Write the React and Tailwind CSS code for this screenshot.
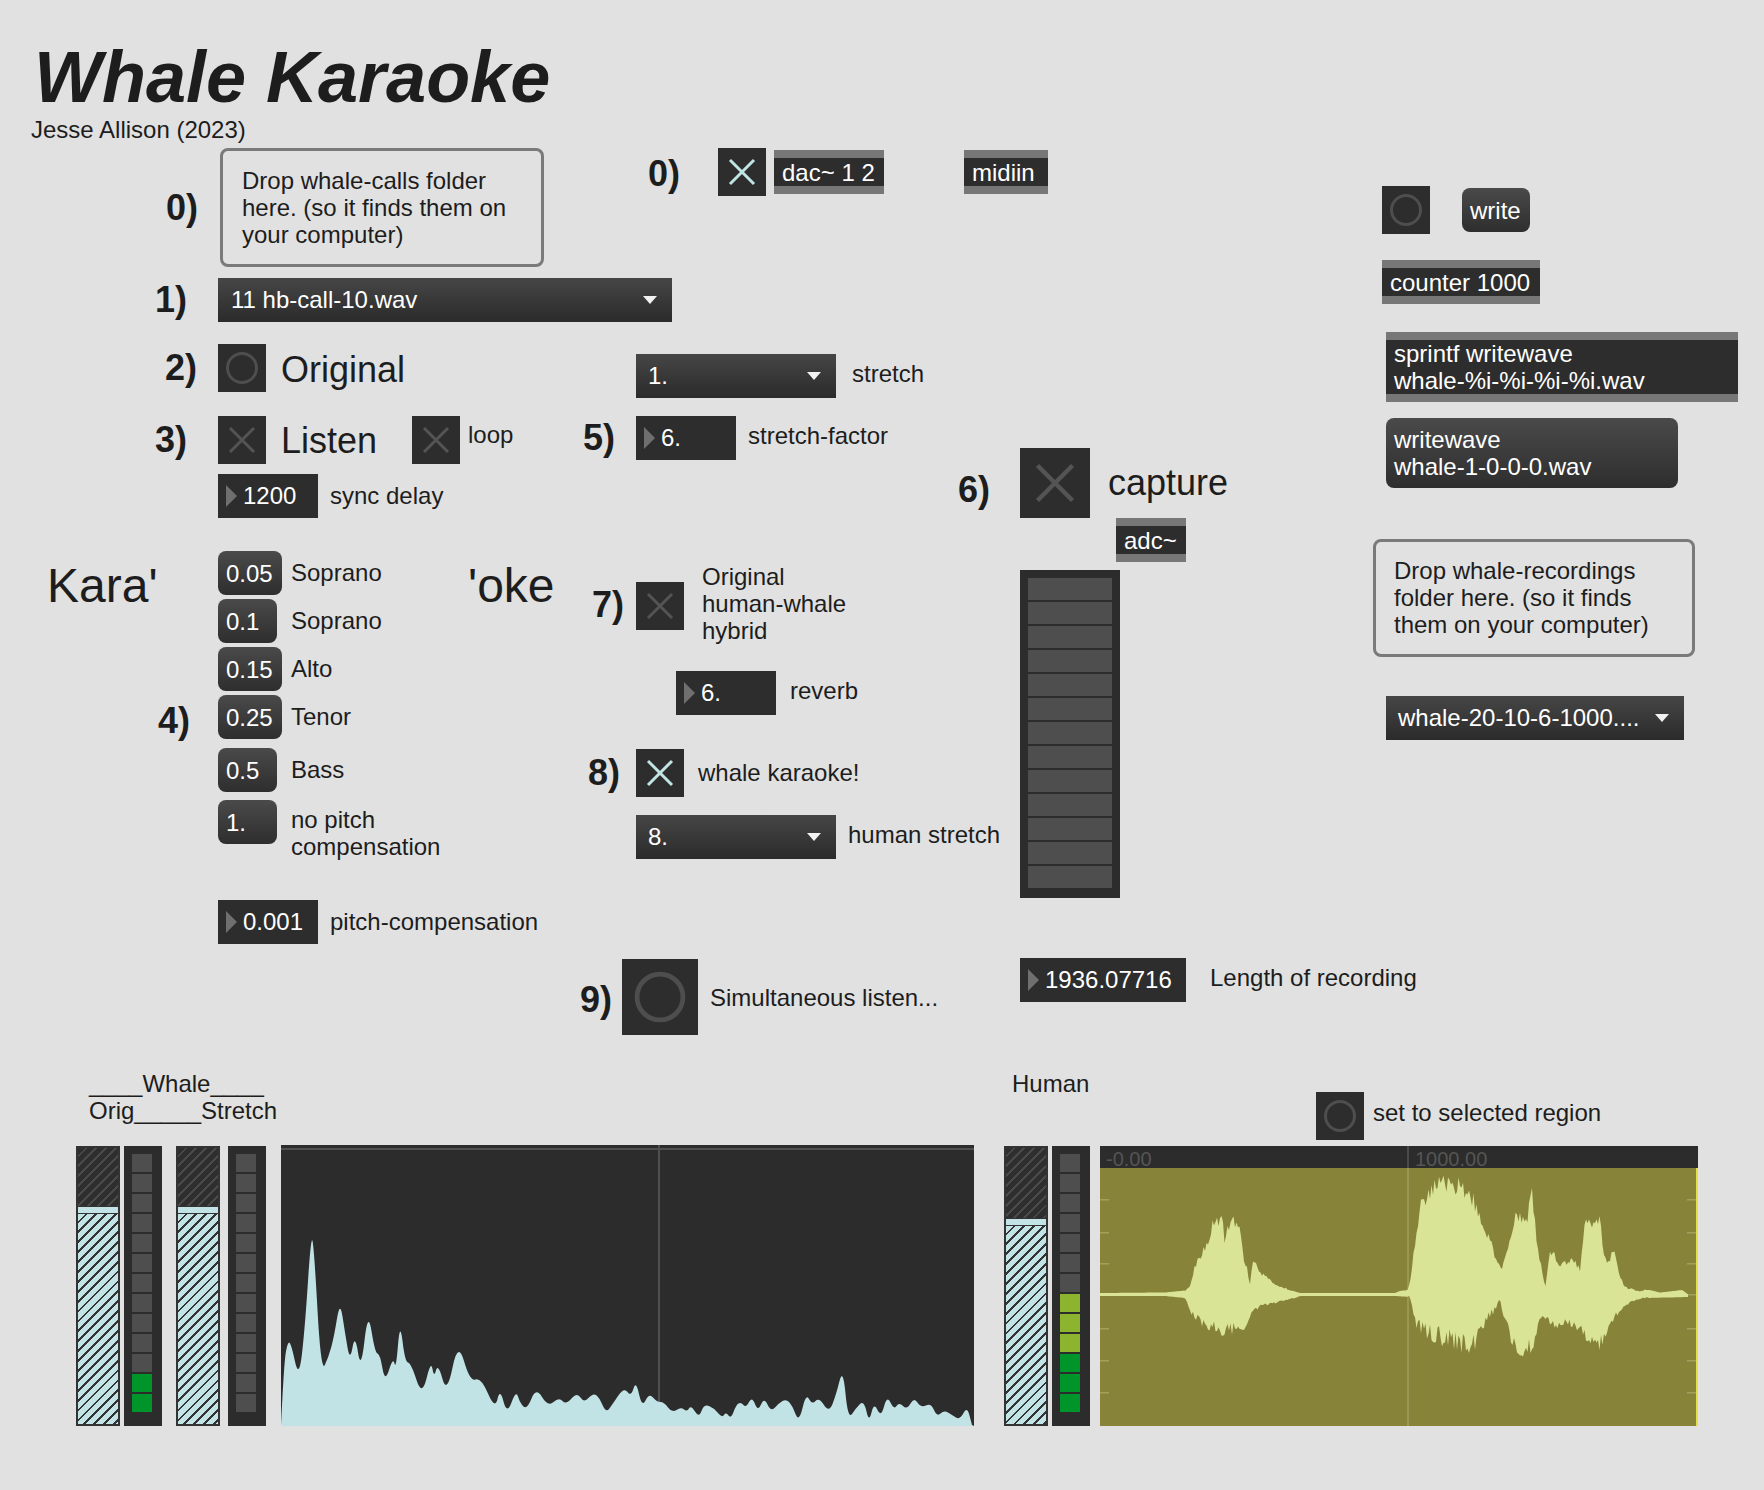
import React from "react";

const SPEC = [[0,280],[3,218],[6.6,197],[10,198],[18,235],[24,182],[30,90],[33,102],[40,228],[47.6,212],[53,192],[59,155],[64,188],[69,217],[74,188],[80,227],[87,164],[94,208],[99,209],[104,238],[112,212],[115,225],[119,175],[124,217],[130,218],[141,252],[150,215],[153,233],[157,218],[166,250],[177,195],[189,237],[200,232],[214,265],[219,243],[226,270],[235,245],[239,258],[246,265],[255,242],[267,262],[278,252],[285,260],[296,247],[303,258],[312,248],[318,252],[325,268],[331,260],[343,242],[350,252],[355,235],[361,263],[368,248],[376,257],[383,257],[391,268],[400,262],[406,267],[410,260],[418,273],[423,259],[433,263],[441,273],[445,267],[450,274],[455,260],[460,257],[465,263],[471,251],[477,267],[483,252],[490,267],[498,258],[505,254],[511,260],[518,278],[525,248],[531,260],[538,252],[548,268],[555,250],[562,222],[567,275],[575,263],[583,255],[588,278],[593,257],[600,273],[606,250],[613,265],[618,257],[626,265],[633,252],[640,263],[650,258],[656,272],[663,265],[671,270],[679,275],[686,261],[691,280]];

const WAVE_TOP = [[0,125],[65,124.5],[85,122.5],[90,115],[96,92],[102,79],[110,65],[112,52],[122,45],[125,68],[130,48],[139,47],[142,75],[150,112],[153,89],[160,102],[175,115],[195,123.5],[200,125],[295,125],[300,123],[308,122],[311,108],[315,68],[320,32],[327,18],[335,7],[350,4],[360,10],[372,20],[380,38],[390,67],[397,92],[402,98],[410,62],[417,32],[425,48],[432,18],[437,72],[445,118],[450,77],[460,92],[472,88],[480,98],[485,48],[492,52],[500,42],[505,88],[515,82],[520,105],[525,118],[540,123],[545,121],[560,124.5],[582,122],[589,127]];
const WAVE_BOT = [[0,128],[65,128],[85,130],[90,145],[100,157],[115,167],[127,169],[145,169],[152,145],[170,137],[195,130],[200,128],[295,128],[310,129],[315,158],[325,173],[340,178],[360,185],[372,188],[380,172],[390,152],[400,135],[407,162],[415,188],[425,197],[435,178],[442,148],[455,163],[467,158],[480,165],[487,175],[500,185],[507,165],[517,148],[530,135],[545,130],[589,129]];

function interp(pts, x) {
  for (let i = 1; i < pts.length; i++) {
    if (x <= pts[i][0]) {
      const [x0, y0] = pts[i - 1];
      const [x1, y1] = pts[i];
      const t = x1 === x0 ? 0 : (x - x0) / (x1 - x0);
      return y0 + (y1 - y0) * t;
    }
  }
  return pts[pts.length - 1][1];
}

// blocky, spiky waveform built from the two envelopes
function wavePath() {
  const up = [];
  const dn = [];
  for (let x = 0; x <= 589; x += 1.5) {
    let t = interp(WAVE_TOP, x);
    let b = interp(WAVE_BOT, x);
    const amp = b - t;
    if (amp > 8) {
      const r = Math.abs(Math.sin(x * 12.9898) * 43758.5453) % 1;
      const r2 = Math.abs(Math.sin(x * 78.233) * 12345.678) % 1;
      t += r * amp * 0.12;
      b -= r2 * amp * 0.12;
    }
    up.push(`${x.toFixed(1)} ${t.toFixed(1)}`);
    dn.push(`${x.toFixed(1)} ${b.toFixed(1)}`);
  }
  return "M" + up.join(" L") + " L" + dn.reverse().join(" L") + " Z";
}

// smoothed spectrum outline
function specPath() {
  let d = `M${SPEC[0][0]} ${SPEC[0][1]}`;
  for (let i = 1; i < SPEC.length - 1; i++) {
    const [x, y] = SPEC[i];
    const [nx, ny] = SPEC[i + 1];
    d += ` Q${x} ${y} ${(x + nx) / 2} ${(y + ny) / 2}`;
  }
  const last = SPEC[SPEC.length - 1];
  return d + ` L${last[0]} ${last[1]} L693 281 L0 281 Z`;
}

function Lbl({ className = "", children }) {
  return <div className={`text-[24px] leading-[27px] whitespace-pre ${className}`}>{children}</div>;
}

function Big({ className = "", children }) {
  return <div className={`text-[36px] leading-[40px] whitespace-nowrap ${className}`}>{children}</div>;
}

function Step({ className = "", children }) {
  return <div className={`shrink-0 text-[36px] leading-[40px] font-bold ${className}`}>{children}</div>;
}

function Toggle({ className = "size-[48px]", on }) {
  return (
    <div className={`shrink-0 bg-[#2d2d2d] ${className}`}>
      <svg viewBox="0 0 48 48" className="block size-full">
        <path d="M12 12 L36 36 M36 12 L12 36" stroke={on ? "#c0e4e4" : "#545454"} strokeWidth="3" fill="none" />
      </svg>
    </div>
  );
}

function Bang({ className = "size-[48px]" }) {
  return (
    <div className={`shrink-0 bg-[#2d2d2d] ${className}`}>
      <svg viewBox="0 0 48 48" className="block size-full">
        <circle cx="24" cy="24" r="14.5" fill="none" stroke="#4e4e4e" strokeWidth="3" />
      </svg>
    </div>
  );
}

function Obj({ className = "", children }) {
  return (
    <div className={`flex items-center bg-[#2d2d2d] border-y-8 border-[#777777] px-[8px] text-white text-[24px] leading-[27px] ${className}`}>
      <div>{children}</div>
    </div>
  );
}

function Msg({ className = "", children }) {
  return (
    <div className={`flex items-center rounded-[8px] bg-linear-to-b from-[#4a4a4a] to-[#2e2e2e] px-[8px] text-white text-[24px] leading-[27px] ${className}`}>
      <div>{children}</div>
    </div>
  );
}

function Num({ className = "w-[100px]", children }) {
  return (
    <div className={`shrink-0 h-[44px] flex items-center bg-[#2d2d2d] text-white text-[24px] ${className}`}>
      <svg width="12" height="22" viewBox="0 0 12 22" className="ml-[8px] mr-[5px] shrink-0">
        <path d="M0 0 L11 11 L0 22 Z" fill="#6f6f6f" />
      </svg>
      <span>{children}</span>
    </div>
  );
}

function Menu({ className = "", children }) {
  return (
    <div className={`shrink-0 h-[44px] flex items-center justify-between bg-linear-to-b from-[#464646] to-[#2b2b2b] pr-[15px] text-white text-[24px] ${className}`}>
      <span>{children}</span>
      <svg width="14" height="8" viewBox="0 0 14 8">
        <path d="M0 0 H14 L7 8 Z" fill="#f2f2f2" />
      </svg>
    </div>
  );
}

function Comment({ className = "", children }) {
  return (
    <div className={`rounded-[8px] border-[3px] border-[#7a7a7a] text-[24px] leading-[27px] ${className}`}>
      {children}
    </div>
  );
}

function Slider({ topH }) {
  return (
    <div className="shrink-0 w-[44px] h-[280px] flex flex-col border-2 border-[#333333] bg-[#333333]">
      <div className={`${topH} bg-[repeating-linear-gradient(135deg,#2e2e2e_0px,#2e2e2e_5px,#4a4a4a_5px,#4a4a4a_7px)]`} />
      <div className="h-[8px] bg-[#c2e4e6] border-y border-[#333333]" />
      <div className="flex-1 bg-[repeating-linear-gradient(135deg,#c2e4e6_0px,#c2e4e6_5px,#333333_5px,#333333_7px)]" />
    </div>
  );
}

function Meter({ className = "", colors }) {
  return (
    <div className={`shrink-0 w-[38px] h-[280px] bg-[#2c2c2c] pt-[8px] pl-[8px] flex flex-col gap-[2px] ${className}`}>
      {colors.map((c, i) => (
        <div key={i} className={`w-[20px] h-[18px] ${c}`} />
      ))}
    </div>
  );
}

const G = "bg-[#4e4e4e]";
const GREEN = "bg-[#00952b]";
const OLIVE = "bg-[#8cb42f]";

const VOICES = [
  { v: "0.05", w: "w-[64px]", label: "Soprano" },
  { v: "0.1", w: "w-[59px]", label: "Soprano" },
  { v: "0.15", w: "w-[64px]", label: "Alto" },
  { v: "0.25", w: "w-[64px]", label: "Tenor", step: "4)" },
  { v: "0.5", w: "w-[59px]", label: "Bass", gap: "mt-[5px]" },
  { v: "1.", w: "w-[59px]", label: "no pitch\ncompensation", gap: "mt-[4px]", top: true },
];

export default function App() {
  const wave = wavePath();
  const spec = specPath();

  return (
    <div className="relative w-[1764px] h-[1490px] overflow-hidden bg-[#e1e1e1] font-['Liberation_Sans',Arial,sans-serif] text-[#1d1d1d]">
      {/* title */}
      <header className="absolute left-[31px] top-[41px] flex flex-col">
        <h1 className="ml-[3px] text-[72px] leading-[72px] font-bold italic whitespace-nowrap">Whale Karaoke</h1>
        <Lbl className="mt-[3px]">Jesse Allison (2023)</Lbl>
      </header>

      <Big className="absolute left-[47px] top-[560px] text-[48px] leading-[52px]">Kara'</Big>
      <Big className="absolute left-[468px] top-[560px] text-[48px] leading-[52px]">'oke</Big>

      {/* steps 0 - 4 */}
      <section className="absolute left-[155px] top-[148px] flex flex-col">
        <div className="flex items-center">
          <Step className="w-[63px] pl-[11px]">0)</Step>
          <Comment className="ml-[2px] w-[324px] h-[119px] pl-[19px] pt-[16px]">
            Drop whale-calls folder
            <br />
            here. (so it finds them on
            <br />
            your computer)
          </Comment>
        </div>
        <div className="mt-[11px] flex items-center">
          <Step className="w-[63px]">1)</Step>
          <Menu className="w-[454px] pl-[13px]">11 hb-call-10.wav</Menu>
        </div>
        <div className="mt-[22px] flex items-center">
          <Step className="w-[63px] pl-[10px]">2)</Step>
          <Bang />
          <Big className="ml-[15px] mt-[4px]">Original</Big>
        </div>
        <div className="mt-[24px] flex items-center">
          <Step className="w-[63px]">3)</Step>
          <Toggle />
          <Big className="ml-[15px] w-[131px] mt-[2px]">Listen</Big>
          <Toggle />
          <Lbl className="ml-[8px] self-start mt-[5px]">loop</Lbl>
        </div>
        <div className="mt-[10px] flex items-center">
          <div className="w-[63px]" />
          <Num>1200</Num>
          <Lbl className="ml-[12px] -mt-[2px]">sync delay</Lbl>
        </div>

        <div className="mt-[33px] flex flex-col gap-[4px]">
          {VOICES.map((r) => (
            <div key={r.v} className={`flex ${r.top ? "items-start" : "items-center"} ${r.gap || ""}`}>
              <Step className={`w-[63px] pl-[3px] ${r.step ? "translate-y-[4px]" : ""}`}>{r.step || ""}</Step>
              <div className="w-[73px]">
                <Msg className={`${r.w} h-[44px]`}>{r.v}</Msg>
              </div>
              <Lbl className={r.top ? "mt-[6px] leading-[26px]" : "-mt-[2px]"}>{r.label}</Lbl>
            </div>
          ))}
        </div>

        <div className="mt-[40px] flex items-center">
          <div className="w-[63px]" />
          <Num>0.001</Num>
          <Lbl className="ml-[12px] -mt-[2px]">pitch-compensation</Lbl>
        </div>
      </section>

      {/* audio on/off */}
      <section className="absolute left-[648px] top-[148px] flex items-center">
        <Step className="w-[70px] mt-[4px]">0)</Step>
        <Toggle on />
        <Obj className="ml-[8px] w-[110px] h-[44px]">dac~ 1 2</Obj>
        <Obj className="ml-[80px] w-[84px] h-[44px]">midiin</Obj>
      </section>

      {/* steps 5, 7, 8, 9 */}
      <section className="absolute left-[580px] top-[354px] flex flex-col">
        <div className="flex items-center">
          <div className="w-[56px]" />
          <Menu className="w-[200px] pl-[12px]">1.</Menu>
          <Lbl className="ml-[16px] -mt-[6px]">stretch</Lbl>
        </div>
        <div className="mt-[18px] flex items-center">
          <Step className="w-[56px] pl-[3px]">5)</Step>
          <Num>6.</Num>
          <Lbl className="ml-[12px] -mt-[6px]">stretch-factor</Lbl>
        </div>
        <div className="mt-[102px] flex items-start">
          <Step className="w-[56px] pl-[12px] mt-[23px]">7)</Step>
          <Toggle className="size-[48px] mt-[20px]" />
          <Lbl className="ml-[18px] mt-[1px]">{"Original\nhuman-whale\nhybrid"}</Lbl>
        </div>
        <div className="mt-[27px] flex items-center">
          <div className="w-[96px]" />
          <Num>6.</Num>
          <Lbl className="ml-[14px] -mt-[5px]">reverb</Lbl>
        </div>
        <div className="mt-[34px] flex items-center">
          <Step className="w-[56px] pl-[8px]">8)</Step>
          <Toggle on />
          <Lbl className="ml-[14px] -mt-[2px]">whale karaoke!</Lbl>
        </div>
        <div className="mt-[18px] flex items-center">
          <div className="w-[56px]" />
          <Menu className="w-[200px] pl-[12px]">8.</Menu>
          <Lbl className="ml-[12px] -mt-[6px]">human stretch</Lbl>
        </div>
        <div className="mt-[100px] flex items-center">
          <Step className="w-[42px] mt-[6px]">9)</Step>
          <Bang className="size-[76px]" />
          <Lbl className="ml-[12px]">Simultaneous listen...</Lbl>
        </div>
      </section>

      {/* step 6: capture */}
      <section className="absolute left-[958px] top-[448px] flex flex-col">
        <div className="flex items-center">
          <Step className="w-[62px] mt-[14px]">6)</Step>
          <Toggle className="size-[70px]" />
          <Big className="ml-[18px]">capture</Big>
        </div>
        <Obj className="ml-[158px] w-[70px] h-[44px]">adc~</Obj>
        <div className="mt-[8px] ml-[62px] w-[100px] h-[328px] bg-[#2c2c2c] pt-[8px] pl-[8px] flex flex-col gap-[2px]">
          {Array.from({ length: 13 }).map((_, i) => (
            <div key={i} className="w-[84px] h-[22px] bg-[#4e4e4e]" />
          ))}
        </div>
        <div className="mt-[60px] ml-[62px] flex items-center">
          <Num className="w-[166px]">1936.07716</Num>
          <Lbl className="ml-[24px] -mt-[5px]">Length of recording</Lbl>
        </div>
      </section>

      {/* recording / writing */}
      <section className="absolute left-[1373px] top-[186px] flex flex-col items-start">
        <div className="ml-[9px] flex items-center">
          <Bang />
          <Msg className="ml-[32px] w-[68px] h-[44px]">write</Msg>
        </div>
        <Obj className="mt-[26px] ml-[9px] w-[158px] h-[44px]">counter 1000</Obj>
        <Obj className="mt-[28px] ml-[13px] w-[352px] h-[70px]">
          sprintf writewave
          <br />
          whale-%i-%i-%i-%i.wav
        </Obj>
        <Msg className="mt-[16px] ml-[13px] w-[292px] h-[70px]">
          writewave
          <br />
          whale-1-0-0-0.wav
        </Msg>
        <Comment className="mt-[51px] w-[322px] h-[118px] pl-[18px] pt-[15px]">
          Drop whale-recordings
          <br />
          folder here. (so it finds
          <br />
          them on your computer)
        </Comment>
        <Menu className="mt-[39px] ml-[13px] w-[298px] pl-[12px]">whale-20-10-6-1000....</Menu>
      </section>

      {/* whale meters + spectrum */}
      <section className="absolute left-[76px] top-[1070px] flex flex-col">
        <Lbl className="ml-[13px]">{"____Whale____\nOrig_____Stretch"}</Lbl>
        <div className="mt-[22px] flex items-start">
          <Slider topH="h-[58px]" />
          <Meter className="ml-[4px]" colors={[G, G, G, G, G, G, G, G, G, G, G, GREEN, GREEN]} />
          <div className="ml-[14px]">
            <Slider topH="h-[58px]" />
          </div>
          <Meter className="ml-[8px]" colors={Array(13).fill(G)} />
          <div className="ml-[15px] -mt-px w-[693px] h-[281px] bg-[#2c2c2c]">
            <svg viewBox="0 0 693 281" className="block size-full" preserveAspectRatio="none">
              <rect x="0" y="3" width="693" height="2" fill="#4f4f4f" />
              <rect x="377" y="0" width="2" height="281" fill="#4f4f4f" />
              <path d={spec} fill="#c2e3e5" />
            </svg>
          </div>
        </div>
      </section>

      {/* human meters + waveform */}
      <section className="absolute left-[1004px] top-[1070px] flex flex-col">
        <div className="flex items-start">
          <Lbl className="ml-[8px] w-[304px]">Human</Lbl>
          <div className="mt-[22px] flex items-center">
            <Bang />
            <Lbl className="ml-[9px] -mt-[8px]">set to selected region</Lbl>
          </div>
        </div>
        <div className="mt-[6px] flex items-start">
          <Slider topH="h-[70px]" />
          <Meter className="ml-[4px]" colors={[G, G, G, G, G, G, G, OLIVE, OLIVE, OLIVE, GREEN, GREEN, GREEN]} />
          <div className="ml-[10px] w-[598px] h-[280px] flex flex-col">
            <div className="relative h-[22px] bg-[#2c2c2c] text-[20px] leading-[22px] text-[#555555]">
              <span className="absolute left-[6px] top-[2px]">-0.00</span>
              <span className="absolute left-[315px] top-[2px]">1000.00</span>
              <div className="absolute left-[307px] top-0 w-[2px] h-full bg-[#4a4a4a]" />
            </div>
            <div className="flex-1 bg-[#87843a]">
              <svg viewBox="0 0 598 258" className="block size-full" preserveAspectRatio="none">
                {[31, 64, 95, 126, 160, 192, 224].map((y) => (
                  <g key={y}>
                    <rect x="0" y={y} width="9" height="1.5" fill="#a29f5c" />
                    <rect x="587" y={y} width="9" height="1.5" fill="#a29f5c" />
                  </g>
                ))}
                <rect x="307" y="0" width="2" height="258" fill="#9a9752" />
                <path d={wave} fill="#d9e496" />
                <rect x="596" y="0" width="2" height="258" fill="#e3e04a" />
              </svg>
            </div>
          </div>
        </div>
      </section>
    </div>
  );
}
